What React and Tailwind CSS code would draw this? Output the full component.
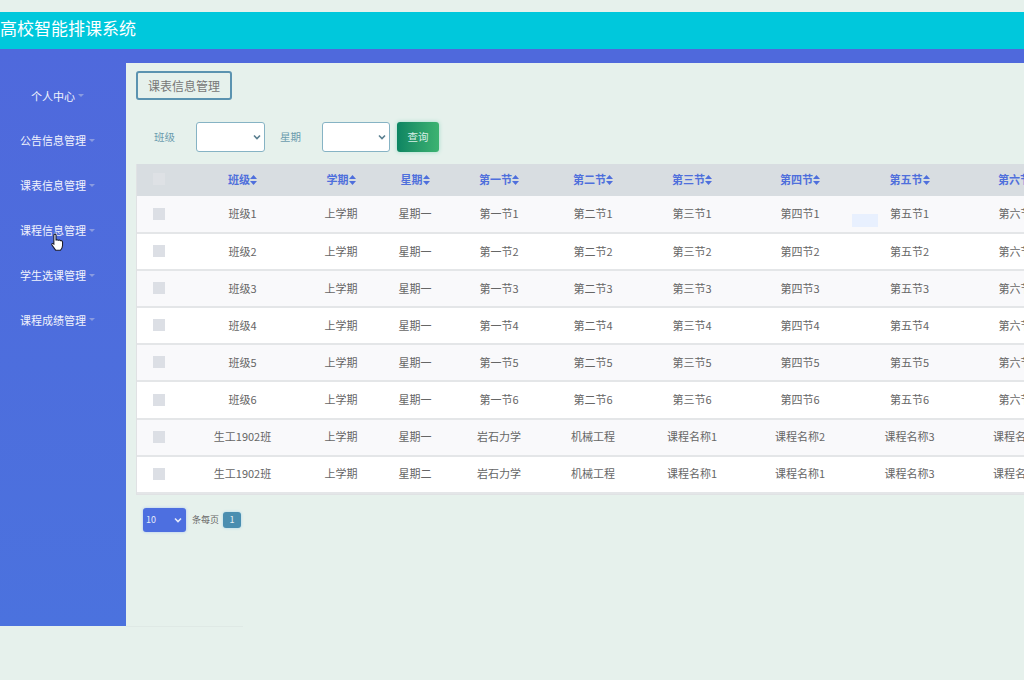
import React from "react";

const menu = ["个人中心", "公告信息管理", "课表信息管理", "课程信息管理", "学生选课管理", "课程成绩管理"];
const headers = ["班级", "学期", "星期", "第一节", "第二节", "第三节", "第四节", "第五节", "第六节"];
const rows = [
  ["班级1", "上学期", "星期一", "第一节1", "第二节1", "第三节1", "第四节1", "第五节1", "第六节1"],
  ["班级2", "上学期", "星期一", "第一节2", "第二节2", "第三节2", "第四节2", "第五节2", "第六节2"],
  ["班级3", "上学期", "星期一", "第一节3", "第二节3", "第三节3", "第四节3", "第五节3", "第六节3"],
  ["班级4", "上学期", "星期一", "第一节4", "第二节4", "第三节4", "第四节4", "第五节4", "第六节4"],
  ["班级5", "上学期", "星期一", "第一节5", "第二节5", "第三节5", "第四节5", "第五节5", "第六节5"],
  ["班级6", "上学期", "星期一", "第一节6", "第二节6", "第三节6", "第四节6", "第五节6", "第六节6"],
  ["生工1902班", "上学期", "星期一", "岩石力学", "机械工程", "课程名称1", "课程名称2", "课程名称3", "课程名称4"],
  ["生工1902班", "上学期", "星期二", "岩石力学", "机械工程", "课程名称1", "课程名称1", "课程名称3", "课程名称4"],
];
const colWidths = [46, 119, 78, 70, 98, 90, 108, 108, 111, 106];

function SortIcon() {
  return (
    <svg width="7" height="10" viewBox="0 0 7 10" className="inline-block align-[-1px]">
      <path d="M3.500 0 7 4H0zM3.500 10 0 6H7z" fill="#4f6fdc" />
    </svg>
  );
}

function Chevron({ color }) {
  return (
    <svg width="8" height="6" viewBox="0 0 8 6" className="pointer-events-none absolute right-[4px] top-1/2 -translate-y-1/2">
      <path d="M1 1.500 4 4.500 7 1.500" fill="none" stroke={color} strokeWidth="1.600" />
    </svg>
  );
}

function Hand() {
  return (
    <svg width="15" height="19" viewBox="0 0 14 17" className="absolute left-[50px] top-[184px]">
      <path
        d="M3.600 1.600c0-1.200 2-1.200 2 0v5c.2-1 2-1 2.100.2.300-1 2-.8 2 .4.400-.8 2-.5 2 .8v3.400c0 2-1 3.400-2 4.400H5.400c-1-1.200-2.200-3-3.600-5-.7-1 .6-2 1.800-.9z"
        fill="#fff"
        stroke="#1a1a2a"
        strokeWidth="1"
      />
    </svg>
  );
}

export default function App() {
  return (
    <div className="h-[680px] w-[1024px] overflow-hidden bg-[#e6f1ec] pt-3 font-['Noto_Sans_CJK_SC',sans-serif]">
      {/* Header */}
      <header className="flex h-[37px] items-center bg-[#00c8dc] pb-[5px] text-[17px] text-white">高校智能排课系统</header>

      <div className="flex h-[577px]">
        {/* Sidebar */}
        <aside className="relative w-[126px] shrink-0 bg-gradient-to-b from-[#4f69dc] to-[#4b72de] pt-[25px]">
          {menu.map((item) => (
            <div key={item} className="flex h-[44.800px] items-center justify-center pb-[1px] pr-[11px] text-[11px] text-[#f1f3fc]">
              {item}
              <span className="ml-[3px] h-0 w-0 border-x-[3.500px] border-t-[3.500px] border-x-transparent border-t-[#8a9be0]" />
            </div>
          ))}
          <Hand />
        </aside>

        {/* Main */}
        <main className="relative min-w-0 flex-1 border-t-[14px] border-[#4f69dc] px-[10px] pt-2">
          <button className="h-[29px] w-[96px] rounded-[3px] border-2 border-[#5b93b0] text-[12px] text-[#777]">
            课表信息管理
          </button>

          <div className="mt-[22px] flex h-[30px] items-center text-[10.500px] text-[#6b9cae]">
            <span className="ml-[18px] w-[42px]">班级</span>
            <div className="relative">
              <select className="block h-[30px] w-[69px] appearance-none rounded-[3px] border border-[#86b3c4] bg-white" />
              <Chevron color="#5a7f90" />
            </div>
            <span className="ml-[15px] w-[42px]">星期</span>
            <div className="relative">
              <select className="block h-[30px] w-[68px] appearance-none rounded-[3px] border border-[#86b3c4] bg-white" />
              <Chevron color="#5a7f90" />
            </div>
            <button className="ml-[7px] h-[30px] w-[42px] rounded-[3px] bg-gradient-to-r from-[#0c8562] to-[#3cb371] text-[#d8efe6] shadow-[0_0_4px_#9fdcc8]">
              查询
            </button>
          </div>

          {/* Table */}
          <div className="mt-[12px] w-[934px] border-b border-l border-[#e0e2e4]">
            <table className="w-[934px] table-fixed border-collapse text-center text-[11px] text-[#666]">
              <colgroup>
                {colWidths.map((w, i) => (
                  <col key={i} style={{ width: w }} />
                ))}
              </colgroup>
              <thead>
                <tr className="h-[32px] bg-[#d8dde1]">
                  <th className="pb-[3px]">
                    <span className="block h-[12px] w-[12px] translate-x-[16px] bg-[#dee1e5]" />
                  </th>
                  {headers.map((h) => (
                    <th key={h} className="whitespace-nowrap pb-[1px] font-bold text-[#4f6fdc]">
                      {h}
                      <SortIcon />
                    </th>
                  ))}
                </tr>
              </thead>
              <tbody>
                {rows.map((row, i) => (
                  <tr key={i} className={`h-[37.100px] border-b-2 border-[#e4e6e8] ${i % 2 === 0 ? "bg-[#f9f9fb]" : "bg-white"}`}>
                    <td className="pb-[1px]">
                      <span className="block h-[12px] w-[12px] translate-x-[16px] bg-[#dcdfe5]" />
                    </td>
                    {row.map((cell, j) => (
                      <td key={j} className="whitespace-nowrap pb-[1px]">
                        {cell}
                      </td>
                    ))}
                  </tr>
                ))}
              </tbody>
            </table>
          </div>

          {/* Pagination */}
          <div className="mt-[13px] flex items-center pl-[7px] text-[9px] text-[#666]">
            <div className="relative">
              <select className="block h-[24px] w-[43px] appearance-none rounded-[3px] bg-[#4d6fe0] pl-[3px] text-[9px] text-[#e6ebfa] shadow-[0_0_3px_#a9c4f2]">
                <option>10</option>
              </select>
              <Chevron color="#e6ebfa" />
            </div>
            <span className="ml-[6px]">条每页</span>
            <span className="ml-[4px] flex h-[16px] w-[18px] items-center justify-center rounded-[3px] bg-[#4a8eb0] text-[#e6f1f5] shadow-[0_0_3px_#a9d4ea]">
              1
            </span>
          </div>

          <div className="absolute left-[726px] top-[151px] h-[13px] w-[26px] bg-[#e8f0fe]" />
        </main>
      </div>
      <div className="ml-[126px] h-px w-[117px] bg-[#dfe9e5]" />
    </div>
  );
}
